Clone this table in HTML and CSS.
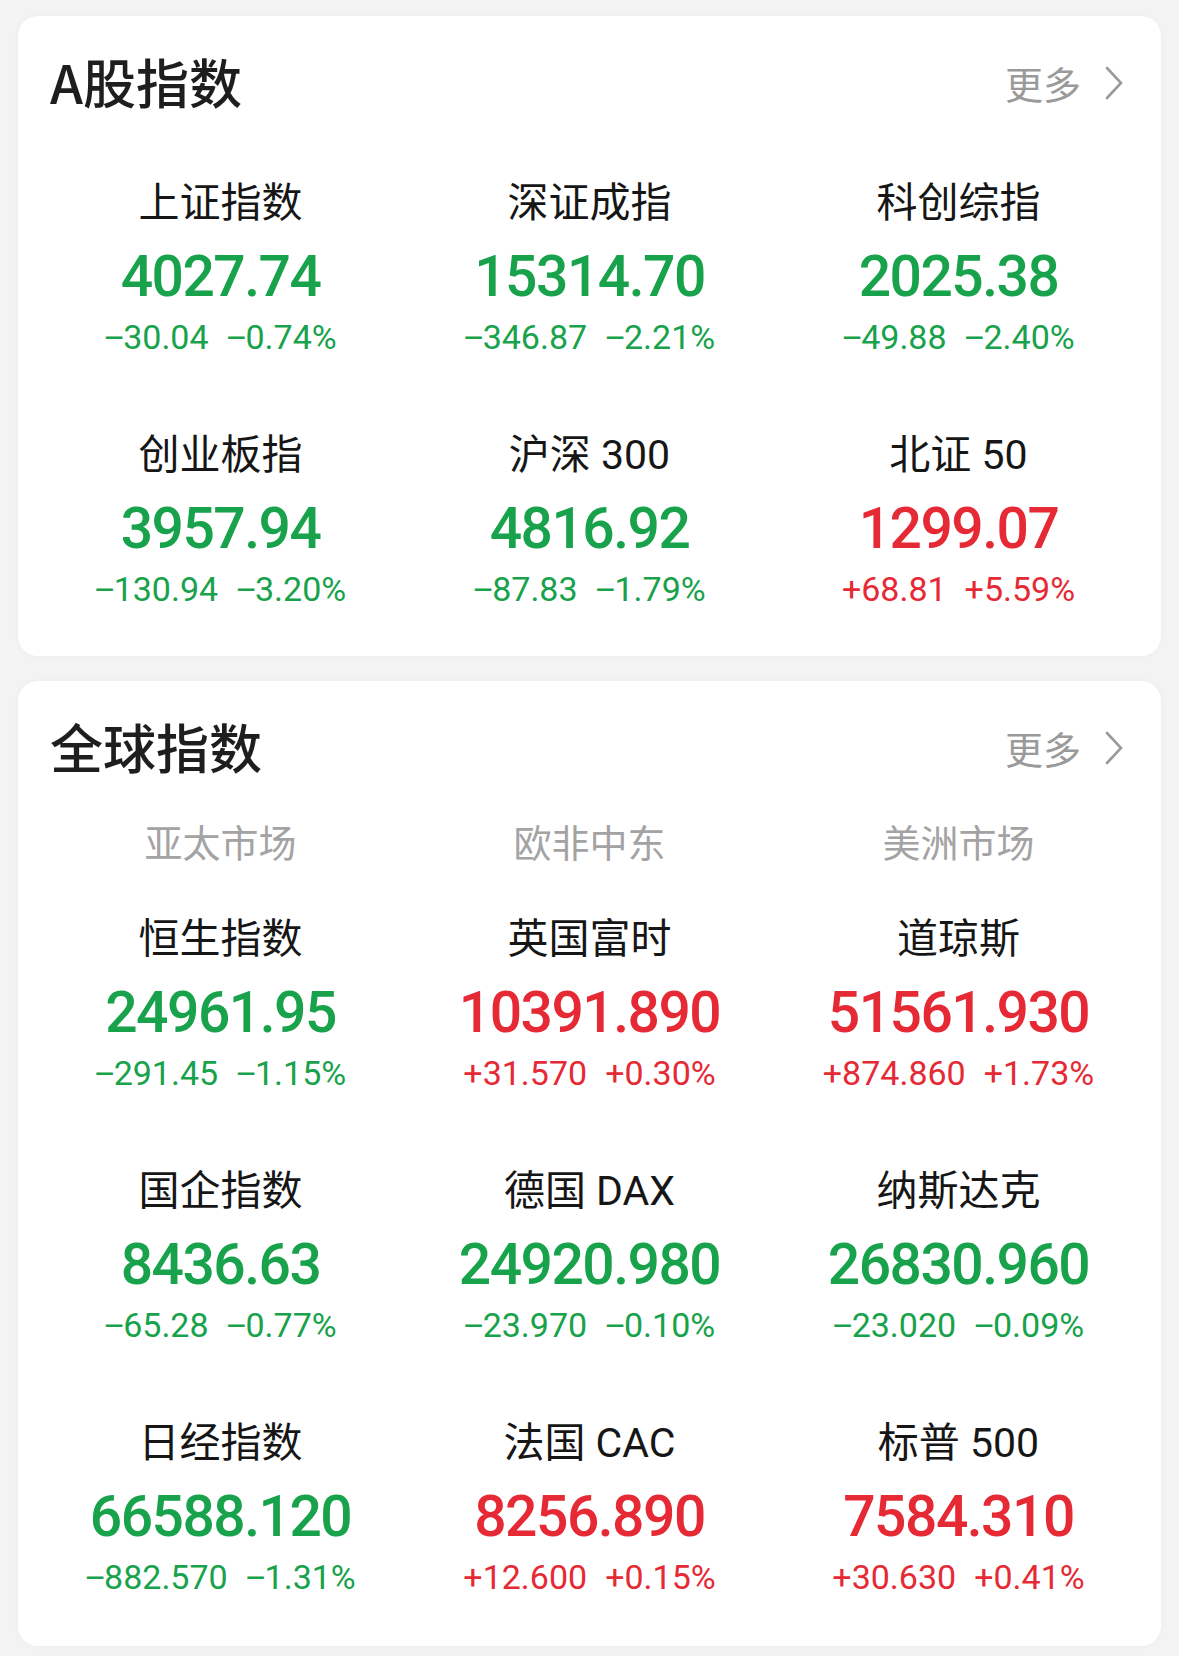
FILE: index.html
```html
<!DOCTYPE html>
<html lang="zh-CN">
<head>
<meta charset="utf-8">
<title>指数</title>
<link rel="stylesheet" href="styles.css">
</head>
<body>
<div class="page">
  <section class="card card-a">
    <header class="card-head">
      <h2 class="card-title">A股指数</h2>
      <a class="more">更多<svg class="chev" viewBox="0 0 18 34" width="18" height="34"><polyline points="2,2 16,17 2,32"/></svg></a>
    </header>
    <div class="grid">
      <div class="cell"><div class="name">上证指数</div><div class="value down">4027.74</div><div class="change down"><span><span class="sign">−</span>30.04</span><span class="pct"><span class="sign">−</span>0.74%</span></div></div>
      <div class="cell"><div class="name">深证成指</div><div class="value down">15314.70</div><div class="change down"><span><span class="sign">−</span>346.87</span><span class="pct"><span class="sign">−</span>2.21%</span></div></div>
      <div class="cell"><div class="name">科创综指</div><div class="value down">2025.38</div><div class="change down"><span><span class="sign">−</span>49.88</span><span class="pct"><span class="sign">−</span>2.40%</span></div></div>
      <div class="cell"><div class="name">创业板指</div><div class="value down">3957.94</div><div class="change down"><span><span class="sign">−</span>130.94</span><span class="pct"><span class="sign">−</span>3.20%</span></div></div>
      <div class="cell"><div class="name">沪深 300</div><div class="value down">4816.92</div><div class="change down"><span><span class="sign">−</span>87.83</span><span class="pct"><span class="sign">−</span>1.79%</span></div></div>
      <div class="cell"><div class="name">北证 50</div><div class="value up">1299.07</div><div class="change up"><span>+68.81</span><span class="pct">+5.59%</span></div></div>
    </div>
  </section>

  <section class="card card-g">
    <header class="card-head">
      <h2 class="card-title">全球指数</h2>
      <a class="more">更多<svg class="chev" viewBox="0 0 18 34" width="18" height="34"><polyline points="2,2 16,17 2,32"/></svg></a>
    </header>
    <div class="markets">
      <div class="market">亚太市场</div>
      <div class="market">欧非中东</div>
      <div class="market">美洲市场</div>
    </div>
    <div class="grid grid-g">
      <div class="cell"><div class="name">恒生指数</div><div class="value down">24961.95</div><div class="change down"><span><span class="sign">−</span>291.45</span><span class="pct"><span class="sign">−</span>1.15%</span></div></div>
      <div class="cell"><div class="name">英国富时</div><div class="value up">10391.890</div><div class="change up"><span>+31.570</span><span class="pct">+0.30%</span></div></div>
      <div class="cell"><div class="name">道琼斯</div><div class="value up">51561.930</div><div class="change up"><span>+874.860</span><span class="pct">+1.73%</span></div></div>
      <div class="cell"><div class="name">国企指数</div><div class="value down">8436.63</div><div class="change down"><span><span class="sign">−</span>65.28</span><span class="pct"><span class="sign">−</span>0.77%</span></div></div>
      <div class="cell"><div class="name">德国 DAX</div><div class="value down">24920.980</div><div class="change down"><span><span class="sign">−</span>23.970</span><span class="pct"><span class="sign">−</span>0.10%</span></div></div>
      <div class="cell"><div class="name">纳斯达克</div><div class="value down">26830.960</div><div class="change down"><span><span class="sign">−</span>23.020</span><span class="pct"><span class="sign">−</span>0.09%</span></div></div>
      <div class="cell"><div class="name">日经指数</div><div class="value down">66588.120</div><div class="change down"><span><span class="sign">−</span>882.570</span><span class="pct"><span class="sign">−</span>1.31%</span></div></div>
      <div class="cell"><div class="name">法国 CAC</div><div class="value up">8256.890</div><div class="change up"><span>+12.600</span><span class="pct">+0.15%</span></div></div>
      <div class="cell"><div class="name">标普 500</div><div class="value up">7584.310</div><div class="change up"><span>+30.630</span><span class="pct">+0.41%</span></div></div>
    </div>
  </section>
</div>
</body>
</html>
```

FILE: styles.css
```css
* { box-sizing: border-box; }

html, body {
  margin: 0;
  padding: 0;
}

body {
  background: #f3f3f3;
  font-family: "Noto Sans CJK SC", "Noto Sans", sans-serif;
  color: #222;
}

.page {
  padding: 16px 18px 10px 18px;
  display: flex;
  flex-direction: column;
  gap: 25px;
}

.card {
  background: #fff;
  border-radius: 20px;
  box-shadow: 0 0 6px rgba(0, 0, 0, 0.03);
  padding: 35px 18px 47px 18px;
}

.card-g {
  padding-bottom: 49px;
}

.card-head {
  display: flex;
  align-items: center;
  justify-content: space-between;
  height: 60px;
  padding: 0 20px 0 14px;
}

.card-title {
  margin: 0;
  font-size: 53px;
  line-height: 60px;
  font-weight: 500;
  color: #1e1e1e;
  letter-spacing: 0;
}

.more {
  display: flex;
  align-items: center;
  font-size: 38px;
  line-height: 60px;
  color: #9a9a9a;
  font-weight: 400;
  position: relative;
  top: 2px;
}

.chev {
  margin-left: 24px;
  fill: none;
  stroke: #9a9a9a;
  stroke-width: 2.6;
  stroke-linecap: round;
  stroke-linejoin: miter;
}

.markets {
  display: grid;
  grid-template-columns: repeat(3, 1fr);
  margin-top: 40px;
}

.market {
  text-align: center;
  font-size: 38px;
  line-height: 50px;
  color: #a3a3a3;
  font-weight: 400;
}

.grid {
  display: grid;
  grid-template-columns: repeat(3, 1fr);
  row-gap: 73px;
  margin-top: 67px;
}

.grid-g {
  margin-top: 48px;
}

.cell {
  display: flex;
  flex-direction: column;
  align-items: center;
}

.name {
  font-family: "Roboto", "Noto Sans CJK SC", sans-serif;
  font-size: 41px;
  line-height: 50px;
  height: 50px;
  font-weight: 400;
  color: #161616;
  white-space: nowrap;
}

.value {
  font-family: "Roboto", sans-serif;
  font-size: 57px;
  line-height: 56px;
  height: 56px;
  font-weight: 500;
  letter-spacing: -1.5px;
  margin-top: 21px;
  white-space: nowrap;
}

.change {
  font-family: "Roboto", sans-serif;
  font-size: 34px;
  line-height: 40px;
  height: 40px;
  font-weight: 400;
  margin-top: 12px;
  white-space: nowrap;
  display: flex;
}

.sign {
  font-family: "Liberation Sans", sans-serif;
  font-weight: 400;
  margin-right: -1px;
}

.pct {
  margin-left: 18px;
}

.down { color: #18a24b; }
.up { color: #e62a35; }
```
